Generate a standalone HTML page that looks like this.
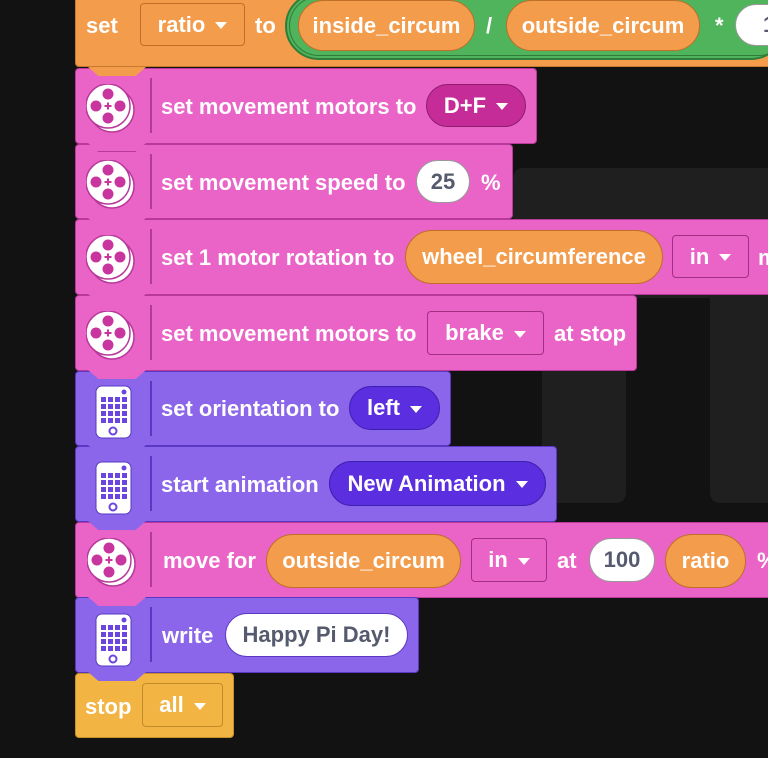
<!DOCTYPE html>
<html><head><meta charset="utf-8"><style>
*{margin:0;padding:0;box-sizing:border-box}
body{width:768px;height:758px;background:#121212;position:relative;overflow:hidden;font-family:"Liberation Sans",sans-serif;font-weight:bold;color:#fff}
.a{position:absolute}
.blk{position:absolute;border-radius:4px}
.pk{background:#E964C6;border:1px solid #B8399A}
.pu{background:#8B66EA;border:1px solid #5a38c4}
.t{position:absolute;font-size:22px;line-height:24px;white-space:nowrap}
.pill{position:absolute;border-radius:27px;display:flex;align-items:center;justify-content:center;font-size:22px;white-space:nowrap}
.dd{position:absolute;border-radius:4px;display:flex;align-items:center;justify-content:center;font-size:22px;white-space:nowrap}
.tri{display:inline-block;width:0;height:0;border-left:6px solid transparent;border-right:6px solid transparent;border-top:7px solid #fff;margin-left:10px;position:relative;top:1px}
.sep{position:absolute;width:2px;background:rgba(120,20,100,.5)}
.tab{position:absolute;width:58px;height:9px;clip-path:polygon(0 0,100% 0,82% 100%,18% 100%);z-index:3}
.w{background:#fff;color:#555a6e;border:1px solid #999}
.or{background:#F29C4C;border:1px solid #c06e28}
</style></head><body>
<div class="a" style="left:513px;top:168px;width:260px;height:130px;background:#1f1f1f;border-radius:10px 0 0 0"></div>
<div class="a" style="left:542px;top:168px;width:84px;height:335px;background:#1f1f1f;border-radius:0 0 10px 10px"></div>
<div class="a" style="left:710px;top:168px;width:70px;height:335px;background:#1f1f1f;border-radius:0 0 0 10px"></div>

<div class="blk" style="left:75px;top:-6px;width:720px;height:73px;background:#F29C4C;border:1px solid #c67a2e"></div>
<div class="t" style="left:86px;top:14px">set</div>
<div class="dd or" style="left:140px;top:3px;width:105px;height:43px">ratio<span class="tri"></span></div>
<div class="t" style="left:255px;top:14px">to</div>
<div class="a" style="left:285px;top:-8px;width:500px;height:68px;background:#4FB45B;border:2px solid #2f7d3a;border-radius:34px"></div>
<div class="a" style="left:289px;top:-4px;width:500px;height:60px;border:1px solid #2f7d3a;border-radius:30px"></div>
<div class="pill or" style="left:298px;top:0;width:177px;height:51px">inside_circum</div>
<div class="t" style="left:486px;top:14px">/</div>
<div class="pill or" style="left:506px;top:0;width:194px;height:51px">outside_circum</div>
<div class="t" style="left:715px;top:14px">*</div>
<div class="pill w" style="left:735px;top:4px;width:60px;height:42px;justify-content:flex-start;padding-left:27px">10</div>
<div class="tab" style="left:88px;top:67px;background:#F29C4C"></div>

<svg width="0" height="0" style="position:absolute"><defs>
<g id="mot"><circle cx="26" cy="26" r="22" fill="#fff" stroke="#B8399A" stroke-width="1.5"/><circle cx="22" cy="22" r="22" fill="#fff" stroke="#B8399A" stroke-width="1.5"/>
<circle cx="22" cy="10" r="5.5" fill="#C9359F"/><circle cx="22" cy="34" r="5.5" fill="#C9359F"/><circle cx="10" cy="22" r="5.5" fill="#C9359F"/><circle cx="34" cy="22" r="5.5" fill="#C9359F"/>
<path d="M22 18.5v7M18.5 22h7" stroke="#C9359F" stroke-width="2"/></g>
<g id="brn"><rect x="1" y="1" width="35" height="52" rx="6" fill="#fff" stroke="#5a38c4"/><circle cx="29" cy="7" r="2.5" fill="#6a45e0"/>
<g fill="#6a45e0"><rect x="6" y="12" width="5" height="5"/><rect x="13" y="12" width="5" height="5"/><rect x="20" y="12" width="5" height="5"/><rect x="27" y="12" width="5" height="5"/>
<rect x="6" y="19" width="5" height="5"/><rect x="13" y="19" width="5" height="5"/><rect x="20" y="19" width="5" height="5"/><rect x="27" y="19" width="5" height="5"/>
<rect x="6" y="26" width="5" height="5"/><rect x="13" y="26" width="5" height="5"/><rect x="20" y="26" width="5" height="5"/><rect x="27" y="26" width="5" height="5"/>
<rect x="6" y="33" width="5" height="5"/><rect x="13" y="33" width="5" height="5"/><rect x="20" y="33" width="5" height="5"/><rect x="27" y="33" width="5" height="5"/></g>
<circle cx="18" cy="46" r="3.5" fill="none" stroke="#6a45e0" stroke-width="2"/></g>
</defs></svg>

<div class="blk pk" style="left:75px;top:68px;width:462px;height:76px"></div>
<svg class="a" style="left:86px;top:84px" width="50" height="50"><use href="#mot"/></svg>
<div class="sep" style="left:150px;top:78px;height:55px"></div>
<div class="t" style="left:161px;top:95px">set movement motors to</div>
<div class="pill" style="left:426px;top:84px;width:100px;height:43px;background:#C52C98;border:1px solid #8e1d6e">D+F<span class="tri"></span></div>
<div class="tab" style="left:88px;top:143px;background:#E964C6;border-bottom:1px solid #B8399A"></div>

<div class="blk pk" style="left:75px;top:144px;width:438px;height:75px"></div>
<svg class="a" style="left:86px;top:160px" width="50" height="50"><use href="#mot"/></svg>
<div class="sep" style="left:150px;top:154px;height:55px"></div>
<div class="t" style="left:161px;top:171px">set movement speed to</div>
<div class="pill w" style="left:416px;top:160px;width:54px;height:43px">25</div>
<div class="t" style="left:481px;top:171px">%</div>
<div class="tab" style="left:88px;top:218px;background:#E964C6"></div>

<div class="blk pk" style="left:75px;top:219px;width:720px;height:76px;border-radius:4px 0 0 4px"></div>
<svg class="a" style="left:86px;top:235px" width="50" height="50"><use href="#mot"/></svg>
<div class="sep" style="left:150px;top:229px;height:55px"></div>
<div class="t" style="left:161px;top:246px">set 1 motor rotation to</div>
<div class="pill or" style="left:405px;top:230px;width:258px;height:54px">wheel_circumference</div>
<div class="dd" style="left:672px;top:235px;width:77px;height:43px;border:1px solid #a32f85">in<span class="tri"></span></div>
<div class="t" style="left:758px;top:246px">m</div>
<div class="tab" style="left:88px;top:294px;background:#E964C6"></div>

<div class="blk pk" style="left:75px;top:295px;width:562px;height:76px"></div>
<svg class="a" style="left:86px;top:311px" width="50" height="50"><use href="#mot"/></svg>
<div class="sep" style="left:150px;top:305px;height:55px"></div>
<div class="t" style="left:161px;top:322px">set movement motors to</div>
<div class="dd" style="left:427px;top:311px;width:117px;height:44px;border:1px solid #a32f85">brake<span class="tri"></span></div>
<div class="t" style="left:554px;top:322px">at stop</div>
<div class="tab" style="left:88px;top:370px;background:#E964C6"></div>

<div class="blk pu" style="left:75px;top:371px;width:376px;height:75px"></div>
<svg class="a" style="left:95px;top:385px" width="38" height="55"><use href="#brn"/></svg>
<div class="sep" style="left:150px;top:381px;height:55px;background:#5a38c4"></div>
<div class="t" style="left:161px;top:397px">set orientation to</div>
<div class="pill" style="left:349px;top:386px;width:91px;height:44px;background:#5B2EE0;border:1px solid #3d1fb0">left<span class="tri"></span></div>
<div class="tab" style="left:88px;top:445px;background:#8B66EA"></div>

<div class="blk pu" style="left:75px;top:446px;width:482px;height:76px"></div>
<svg class="a" style="left:95px;top:461px" width="38" height="55"><use href="#brn"/></svg>
<div class="sep" style="left:150px;top:456px;height:55px;background:#5a38c4"></div>
<div class="t" style="left:161px;top:473px">start animation</div>
<div class="pill" style="left:329px;top:461px;width:217px;height:45px;background:#5B2EE0;border:1px solid #3d1fb0">New Animation<span class="tri"></span></div>
<div class="tab" style="left:88px;top:521px;background:#8B66EA"></div>

<div class="blk pk" style="left:75px;top:522px;width:720px;height:76px;border-radius:4px 0 0 4px"></div>
<svg class="a" style="left:87px;top:538px" width="50" height="50"><use href="#mot"/></svg>
<div class="sep" style="left:150px;top:532px;height:55px"></div>
<div class="t" style="left:163px;top:549px">move for</div>
<div class="pill or" style="left:266px;top:534px;width:195px;height:54px">outside_circum</div>
<div class="dd" style="left:471px;top:538px;width:76px;height:44px;border:1px solid #a32f85">in<span class="tri"></span></div>
<div class="t" style="left:557px;top:549px">at</div>
<div class="pill w" style="left:589px;top:538px;width:66px;height:44px">100</div>
<div class="pill or" style="left:665px;top:534px;width:81px;height:54px">ratio</div>
<div class="t" style="left:757px;top:549px">%</div>
<div class="tab" style="left:88px;top:597px;background:#E964C6"></div>

<div class="blk pu" style="left:75px;top:597px;width:344px;height:76px"></div>
<svg class="a" style="left:95px;top:613px" width="38" height="55"><use href="#brn"/></svg>
<div class="sep" style="left:150px;top:607px;height:55px;background:#5a38c4"></div>
<div class="t" style="left:162px;top:624px">write</div>
<div class="pill w" style="left:225px;top:613px;width:183px;height:44px;border-color:#5a38c4">Happy Pi Day!</div>

<div class="blk" style="left:75px;top:673px;width:159px;height:65px;background:#F2B544;border:1px solid #c9902a"></div>
<div class="tab" style="left:88px;top:672px;background:#8B66EA"></div>
<div class="t" style="left:85px;top:695px">stop</div>
<div class="dd" style="left:142px;top:683px;width:81px;height:44px;border:1px solid #c28a2a">all<span class="tri"></span></div>
</body></html>
